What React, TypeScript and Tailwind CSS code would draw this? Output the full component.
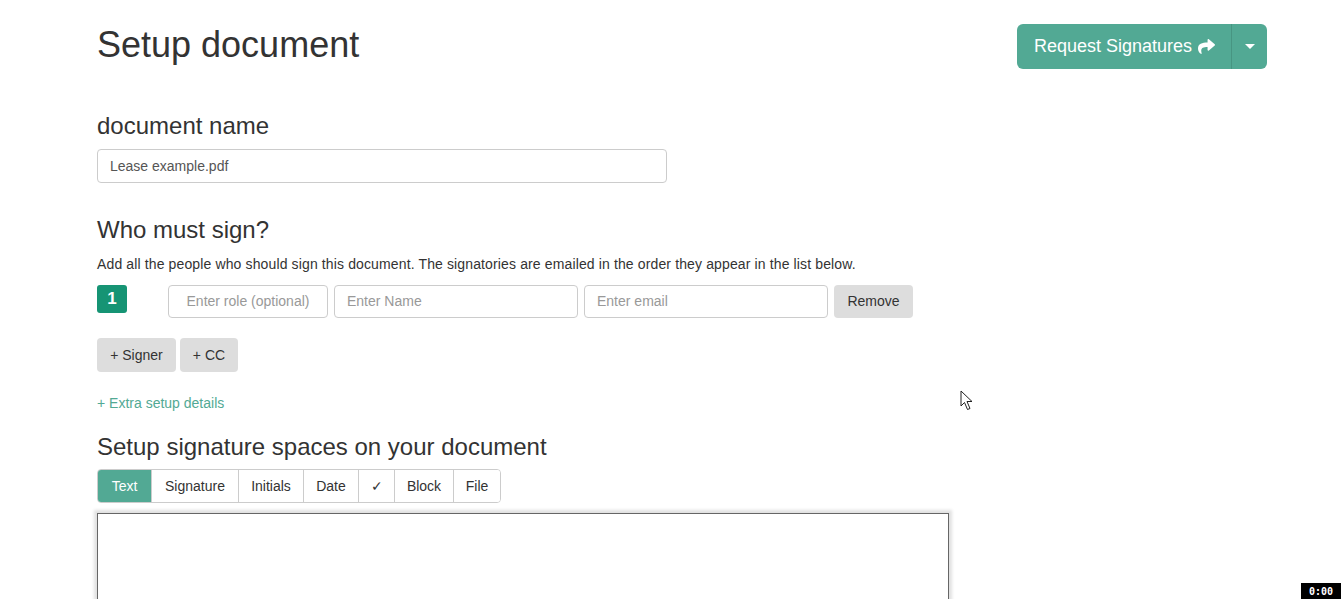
import { FaShare } from "react-icons/fa";

const tools = ["Text", "Signature", "Initials", "Date", "✓", "Block", "File"];

function Cursor() {
  return (
    <svg
      className="absolute left-[960px] top-[390px]"
      width="14"
      height="22"
      viewBox="0 0 14 22"
    >
      <path
        d="M1 1 L1 16 L4.5 12.5 L7.5 19.5 L10 18.5 L7 11.5 L12 11.5 Z"
        fill="#fff"
        stroke="#222"
        strokeWidth="1"
        strokeLinejoin="round"
      />
    </svg>
  );
}

export default function App() {
  return (
    <div className="relative h-[599px] overflow-hidden bg-white font-['Liberation_Sans',Arial,sans-serif] text-[#333]">
      <div className="pl-[97px] pr-[74px]">
        <div className="flex items-start justify-between">
          <h1 className="mt-[25px] text-[36px] leading-[40px]">Setup document</h1>
          <div className="mt-[24px] flex h-[45px] rounded-[6px] bg-[#52a994] text-white">
            <div className="flex items-center gap-[6px] pl-[17px] pr-[16px] text-[18px]">
              Request Signatures
              <FaShare className="h-[17px] w-[17px]" />
            </div>
            <div className="flex w-[36px] items-center justify-center border-l border-[#479582]">
              <div className="h-0 w-0 border-x-[5px] border-t-[5px] border-x-transparent border-t-white" />
            </div>
          </div>
        </div>

        <h3 className="mt-[44px] text-[24px] leading-[26px]">document name</h3>
        <div className="mt-[10px] flex h-[34px] w-[570px] items-center rounded-[4px] border border-[#ccc] px-[12px] text-[14px] text-[#555]">
          Lease example.pdf
        </div>

        <h3 className="mt-[34px] text-[24px] leading-[26px]">Who must sign?</h3>
        <p className="mt-[11px] text-[14px] leading-[20px] tracking-[0.13px]">
          Add all the people who should sign this document. The signatories are emailed in the order they appear in the list below.
        </p>
        <div className="mt-[11px] flex items-start">
          <div className="flex h-[28px] w-[30px] items-center justify-center rounded-[3px] bg-[#169474] text-[17px] font-bold text-white">
            1
          </div>
          <div className="ml-[41px] flex h-[33px] w-[160px] items-center justify-center rounded-[4px] border border-[#ccc] text-[14px] text-[#999]">
            Enter role (optional)
          </div>
          <div className="ml-[6px] flex h-[33px] w-[244px] items-center rounded-[4px] border border-[#ccc] px-[12px] text-[14px] text-[#999]">
            Enter Name
          </div>
          <div className="ml-[6px] flex h-[33px] w-[244px] items-center rounded-[4px] border border-[#ccc] px-[12px] text-[14px] text-[#999]">
            Enter email
          </div>
          <div className="ml-[6px] flex h-[33px] w-[79px] items-center justify-center rounded-[4px] bg-[#ddd] text-[14px]">
            Remove
          </div>
        </div>

        <div className="mt-[20px] flex gap-[4px]">
          <div className="flex h-[34px] w-[79px] items-center justify-center rounded-[4px] bg-[#ddd] text-[14px]">
            + Signer
          </div>
          <div className="flex h-[34px] w-[58px] items-center justify-center rounded-[4px] bg-[#ddd] text-[14px]">
            + CC
          </div>
        </div>

        <div className="mt-[21px] text-[14px] leading-[20px] text-[#52a994]">+ Extra setup details</div>

        <h3 className="mt-[21px] text-[24px] leading-[26px]">Setup signature spaces on your document</h3>
        <div className="mt-[9px] flex h-[34px] w-fit overflow-hidden rounded-[4px] border border-[#ccc] text-[14px]">
          {tools.map((t, i) => (
            <div
              key={t}
              className={
                i === 0
                  ? "flex w-[53px] items-center justify-center bg-[#52a994] text-white"
                  : "flex items-center justify-center border-l border-[#ccc] bg-white " +
                    (t === "Signature"
                      ? "w-[87px]"
                      : t === "Initials"
                        ? "w-[65px]"
                        : t === "Date"
                          ? "w-[55px]"
                          : t === "✓"
                            ? "w-[36px]"
                            : t === "Block"
                              ? "w-[59px]"
                              : "w-[47px]")
              }
            >
              {t}
            </div>
          ))}
        </div>

        <div className="mt-[10px] h-[200px] w-[852px] border border-[#666] bg-white shadow-[0_0_3px_3px_rgba(0,0,0,0.12)]" />
      </div>

      <Cursor />
      <div className="absolute bottom-0 right-0 flex h-[16px] w-[40px] items-center justify-center bg-black font-['DejaVu_Sans_Mono',monospace] text-[10px] font-bold text-white">
        0:00
      </div>
    </div>
  );
}
